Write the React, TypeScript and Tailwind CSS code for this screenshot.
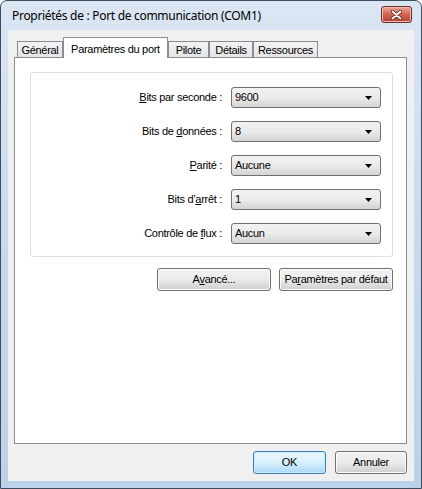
import { ReactNode } from "react";

const ui = { fontFamily: '"Liberation Sans", Arial, sans-serif' };

function Combo({ value }: { value: string }) {
  return (
    <div className="flex h-[21px] w-[150px] items-center justify-between rounded-[3px] border border-[#707070] bg-gradient-to-b from-[#f2f2f2] via-[#ebebeb] to-[#d4d4d4] pl-[3px] pr-[8px] text-[11px] text-black">
      <span>{value}</span>
      <svg width="7" height="4" viewBox="0 0 7 4">
        <path d="M0 0h7L3.5 4z" fill="#000" />
      </svg>
    </div>
  );
}

function Row({ label, value }: { label: ReactNode; value: string }) {
  return (
    <div className="flex items-center">
      <div className="w-[192px] pr-[1px] text-right text-[11px] text-black">{label}</div>
      <div className="ml-[8px]">
        <Combo value={value} />
      </div>
    </div>
  );
}

function Button({ children, w, primary }: { children: ReactNode; w: string; primary?: boolean }) {
  return (
    <div
      className={`flex h-[23px] items-center justify-center rounded-[3px] border text-[11px] text-black ${w} ${
        primary
          ? "border-[#3c7fb1] bg-gradient-to-b from-[#eaf6fd] via-[#d9f0fc] to-[#a7d9f5] shadow-[inset_0_0_0_1px_#c8ecfb]"
          : "border-[#707070] bg-gradient-to-b from-[#f2f2f2] via-[#ebebeb] to-[#cfcfcf] shadow-[inset_0_0_0_1px_#fcfcfc]"
      }`}
    >
      {children}
    </div>
  );
}

function Tab({ label, w, active }: { label: string; w: string; active?: boolean }) {
  if (active) {
    return (
      <div
        className={`relative z-10 -mb-[1px] flex h-[21px] items-start justify-center border border-b-0 border-[#898c95] bg-white pt-[3px] text-[11px] text-black ${w}`}
      >
        {label}
      </div>
    );
  }
  return (
    <div
      className={`flex h-[16px] items-center justify-center border border-b-0 border-[#898c95] bg-gradient-to-b from-[#f3f3f3] to-[#e5e5e5] pt-[1px] text-[11px] text-black ${w}`}
    >
      {label}
    </div>
  );
}

export default function App() {
  return (
    <div className="h-[489px] w-[422px] overflow-hidden bg-white">
      <div
        className="flex h-[489px] w-[422px] flex-col rounded-t-[7px] border border-[#3d4d60] bg-gradient-to-b from-[#dbe6f3] via-[#c8d9ee] to-[#bcd1ea] tracking-[-0.3px]"
        style={ui}
      >
        <div className="flex h-[29px] items-center justify-between pl-[11px] pr-[9px]">
          <span className="pt-[1px] text-[12px] text-black" style={{ fontFamily: '"Noto Sans", "Open Sans", sans-serif' }}>
            Propriétés de : Port de communication (COM1)
          </span>
          <div className="mt-[-2px] flex h-[17px] w-[31px] items-center justify-center rounded-[3px] border border-[#6d2a22] bg-gradient-to-b from-[#e9a99b] via-[#d0634f] to-[#b9412c] shadow-[inset_0_0_0_1px_#eec0b5]">
            <svg width="11" height="10" viewBox="0 0 11 10">
              <path d="M1.5 1.5l8 7M9.5 1.5l-8 7" stroke="#5a2018" strokeWidth="3.4" strokeLinecap="round" />
              <path d="M1.5 1.5l8 7M9.5 1.5l-8 7" stroke="#fff" strokeWidth="1.8" strokeLinecap="round" />
            </svg>
          </div>
        </div>

        <div className="mx-[7px] flex h-[451px] flex-col bg-[#f0f0f0] pt-[7px]">
          <div className="flex h-[20px] items-end pl-[9px]">
            <Tab label="Général" w="w-[46px]" />
            <Tab label="Paramètres du port" w="w-[105px]" active />
            <Tab label="Pilote" w="w-[41px]" />
            <Tab label="Détails" w="w-[44px]" />
            <Tab label="Ressources" w="w-[65px]" />
          </div>

          <div className="ml-[6px] h-[387px] w-[393px] border border-[#898c95] bg-white">
            <div className="ml-[15px] mr-[13px] mt-[14px]">
              <div className="flex flex-col gap-[13px] rounded-[3px] border border-[#d5dfe5] pb-[12px] pt-[14px]">
                <Row label={<><u>B</u>its par seconde :</>} value="9600" />
                <Row label={<>Bits de <u>d</u>onnées :</>} value="8" />
                <Row label={<><u>P</u>arité :</>} value="Aucune" />
                <Row label={<>Bits d’<u>a</u>rrêt :</>} value="1" />
                <Row label={<>Contrôle de <u>f</u>lux :</>} value="Aucun" />
              </div>
              <div className="mt-[11px] flex justify-end gap-[8px]">
                <Button w="w-[114px]">
                  A<u>v</u>ancé...
                </Button>
                <Button w="w-[114px]">
                  Pa<u>r</u>amètres par défaut
                </Button>
              </div>
            </div>
          </div>

          <div className="mt-[7px] flex justify-end gap-[9px] pr-[7px]">
            <Button w="w-[73px]" primary>
              OK
            </Button>
            <Button w="w-[72px]">Annuler</Button>
          </div>
        </div>
      </div>
    </div>
  );
}
